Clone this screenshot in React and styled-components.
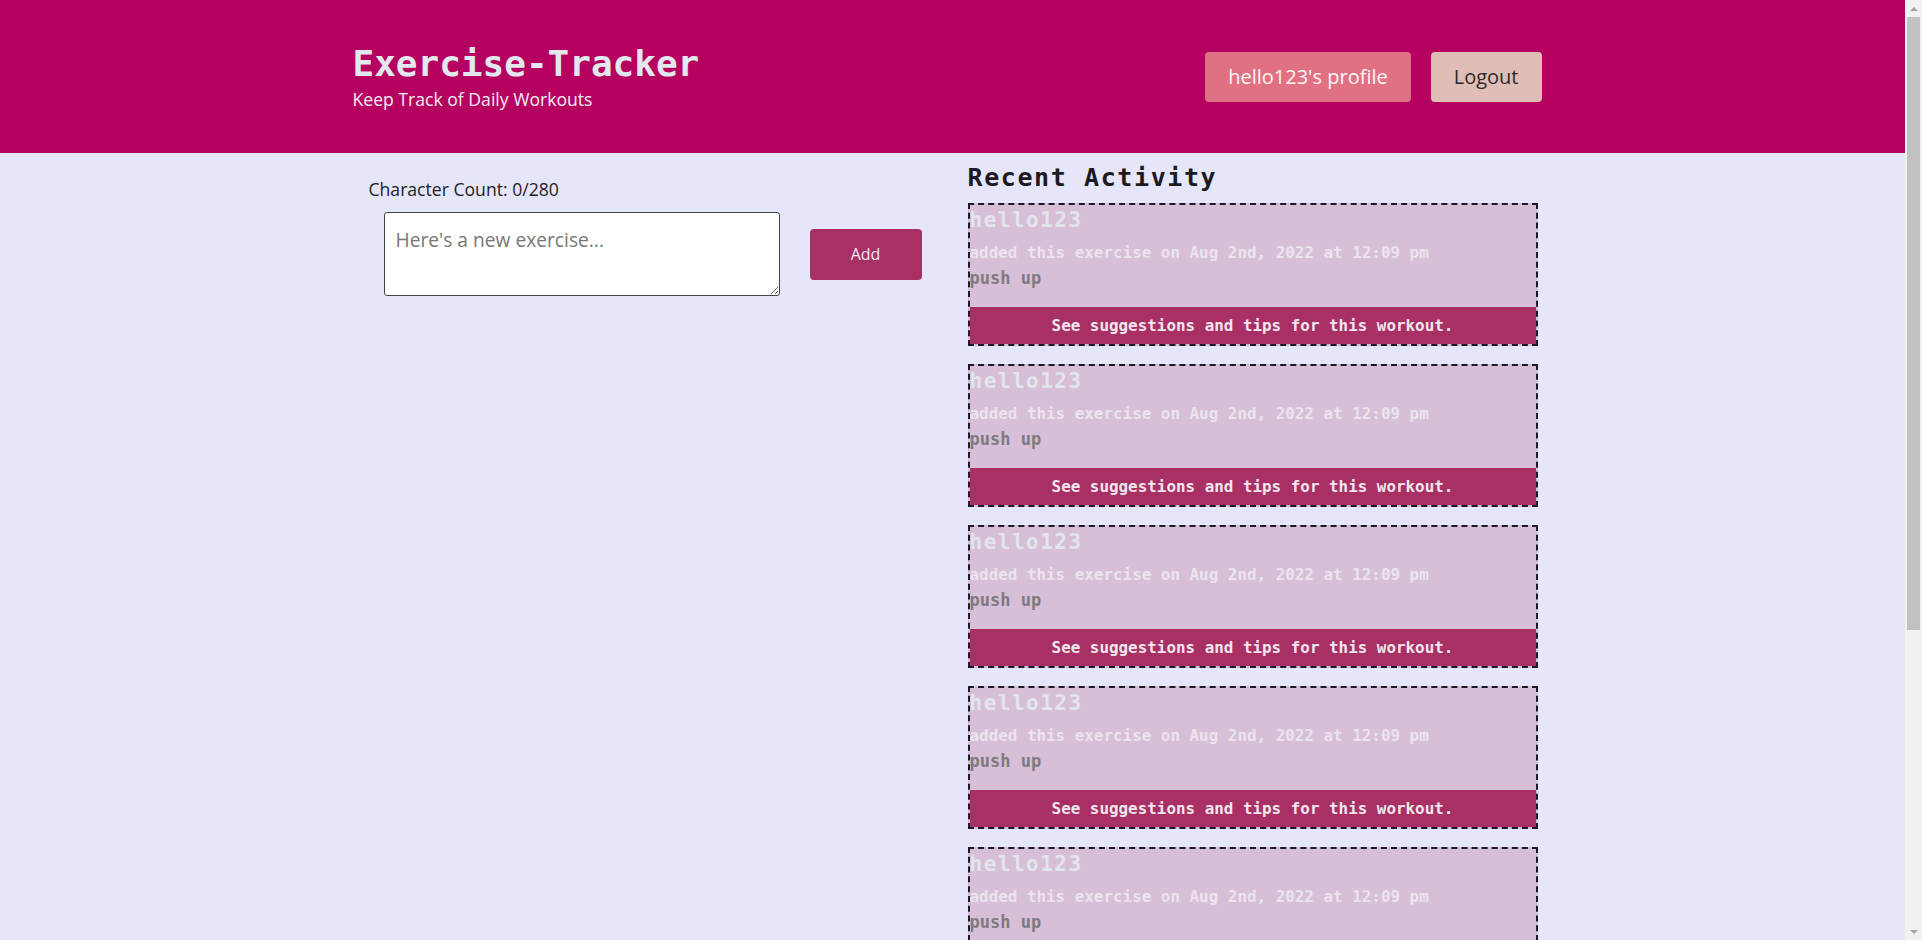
import React, { useState } from "react";
import styled, { createGlobalStyle } from "styled-components";

const GlobalStyle = createGlobalStyle`
  body {
    margin: 0;
    padding-right: 17px;
    background: #e6e6fa;
    font-family: "Open Sans", "Liberation Sans", sans-serif;
  }
`;

const activities = Array.from({ length: 7 }, () => ({
  user: "hello123",
  date: "Aug 2nd, 2022 at 12:09 pm",
  exercise: "push up",
}));

function App() {
  const [text, setText] = useState("");

  return (
    <>
      <GlobalStyle />
      <Header>
        <HeaderInner>
          <Brand>
            <Title>Exercise-Tracker</Title>
            <Subtitle>Keep Track of Daily Workouts</Subtitle>
          </Brand>
          <Nav>
            <NavButton profile>hello123's profile</NavButton>
            <NavButton>Logout</NavButton>
          </Nav>
        </HeaderInner>
      </Header>
      <Main>
        <Composer>
          <Count>Character Count: {text.length}/280</Count>
          <ComposeRow>
            <TextBox
              placeholder="Here's a new exercise..."
              value={text}
              onChange={(e) => setText(e.target.value)}
            />
            <AddButton>Add</AddButton>
          </ComposeRow>
        </Composer>
        <Feed>
          <FeedTitle>Recent Activity</FeedTitle>
          {activities.map((a, i) => (
            <Card key={i}>
              <User>{a.user}</User>
              <Stamp>added this exercise on {a.date}</Stamp>
              <Exercise>{a.exercise}</Exercise>
              <TipsBar>See suggestions and tips for this workout.</TipsBar>
            </Card>
          ))}
        </Feed>
      </Main>
      {/* the window's scrollbar, as the screenshot shows it */}
      <Scrollbar>
        <Arrow />
        <Track>
          <Thumb />
        </Track>
        <Arrow down />
      </Scrollbar>
    </>
  );
}

const mono = `"DejaVu Sans Mono", "Liberation Mono", monospace`;

const Header = styled.header`
  background: #b50260;
  height: 153px;
`;

const HeaderInner = styled.div`
  width: 1200px;
  height: 100%;
  margin: 0 auto;
  padding-right: 11px;
  box-sizing: border-box;
  display: flex;
  align-items: center;
  justify-content: space-between;
`;

const Brand = styled.div`
  display: flex;
  flex-direction: column;
`;

const Title = styled.h1`
  margin: 0;
  font-family: ${mono};
  font-size: 36px;
  line-height: 42px;
  font-weight: 700;
  color: #e2e8ee;
`;

const Subtitle = styled.div`
  margin-top: 3px;
  font-size: 17.6px;
  line-height: 22px;
  color: #f4eef4;
`;

const Nav = styled.nav`
  display: flex;
  gap: 20px;
`;

const NavButton = styled.button`
  height: 50px;
  padding: 0 23px;
  border: none;
  border-radius: 4px;
  font-family: "Open Sans", sans-serif;
  font-size: 20px;
  background: ${({ profile }) => (profile ? "#e07182" : "#e0bdb7")};
  color: ${({ profile }) => (profile ? "#fff6f6" : "#2e2a2a")};
  cursor: pointer;
`;

const Main = styled.main`
  width: 1200px;
  margin: 0 auto;
  display: grid;
  grid-template-columns: 615px 570px;
  padding-bottom: 62px;
`;

const Composer = styled.section`
  padding: 24px 0 0 16px;
`;

const Count = styled.div`
  font-size: 17.6px;
  line-height: 24px;
  color: #222;
`;

const ComposeRow = styled.div`
  display: flex;
  align-items: center;
  gap: 30px;
  margin: 11px 0 0 15px;
`;

const TextBox = styled.textarea`
  width: 396px;
  height: 84px;
  box-sizing: border-box;
  padding: 13px 11px;
  border: 1px solid #444;
  border-radius: 3px;
  font-family: "Open Sans", sans-serif;
  font-size: 19.2px;
  background: #fff;
  &::placeholder {
    color: #777;
  }
`;

const AddButton = styled.button`
  width: 112px;
  height: 51px;
  border: none;
  border-radius: 4px;
  background: #a83064;
  color: #f2e8ee;
  font-family: "Open Sans", sans-serif;
  font-size: 16px;
  cursor: pointer;
`;

const Feed = styled.section`
  padding-top: 11px;
`;

const FeedTitle = styled.h2`
  margin: 0 0 11px;
  font-family: ${mono};
  font-size: 25px;
  letter-spacing: 1.6px;
  line-height: 28px;
  font-weight: 700;
  color: #1c1a1e;
`;

const Card = styled.article`
  border: 2px dashed #1a1a26;
  background: #d8bfd8;
  margin-bottom: 18px;
  font-family: ${mono};
  font-weight: 700;
`;

const User = styled.div`
  margin-top: 3px;
  font-size: 21px;
  letter-spacing: 1.5px;
  line-height: 24px;
  color: #e2e6ec;
`;

const Stamp = styled.div`
  margin-top: 12px;
  font-size: 15.9px;
  line-height: 18px;
  color: #ebe4ee;
`;

const Exercise = styled.div`
  margin-top: 7px;
  font-size: 17px;
  line-height: 19px;
  color: #7e7a80;
`;

const TipsBar = styled.div`
  margin-top: 19px;
  height: 37px;
  display: flex;
  align-items: center;
  justify-content: center;
  background: #a83064;
  color: #f2e6ee;
  font-size: 15.9px;
  cursor: pointer;
`;

const Scrollbar = styled.div`
  position: fixed;
  top: 0;
  right: 0;
  width: 17px;
  height: 100vh;
  background: #f1f1f1;
  display: flex;
  flex-direction: column;
`;

const Arrow = styled.div`
  height: 17px;
  display: flex;
  align-items: center;
  justify-content: center;
  &::before {
    content: "";
    border-left: 4px solid transparent;
    border-right: 4px solid transparent;
    ${({ down }) =>
      down
        ? `border-top: 4px solid #a3a3a3;`
        : `border-bottom: 4px solid #a3a3a3;`}
  }
`;

const Track = styled.div`
  flex: 1;
  padding: 0 2px;
`;

const Thumb = styled.div`
  height: 613px;
  background: #c1c1c1;
`;

export default App;
